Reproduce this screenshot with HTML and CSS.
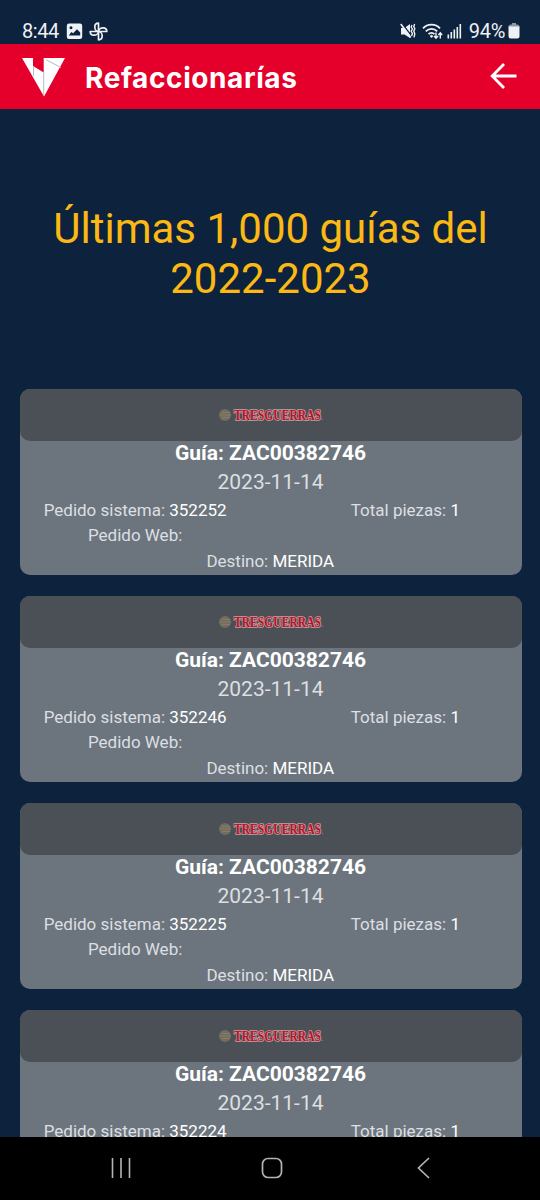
FILE: index.html
```html
<!DOCTYPE html>
<html lang="es">
<head>
    <meta charset="UTF-8">
    <meta name="viewport" content="width=device-width, initial-scale=1.0">
    <title>Refaccionarías</title>
    <link rel="stylesheet" href="styles.css">
</head>
<body>
    <div class="status-bar">
        <div class="status-left">
            <span class="clock">8:44</span>
            <svg class="icon-image" width="17" height="17" viewBox="0 0 17 17">
                <path fill="#eef1f5" fill-rule="evenodd" d="M3 .5h11a2.2 2.2 0 0 1 2.2 2.2v11a2.2 2.2 0 0 1-2.2 2.3H3a2.2 2.2 0 0 1-2.2-2.3v-11A2.2 2.2 0 0 1 3 .5zM2.800 12.500h11.400v-3l-3.200-3.200-3.900 4-1.700-1.400zM5 3.300a1.500 1.500 0 1 0 .01 0z"/>
            </svg>
            <svg class="icon-fan" width="19" height="19" viewBox="0 0 19 19" fill="none" stroke="#eef1f5" stroke-width="1.700" stroke-linejoin="round">
                <path d="M9.500 9.500V1.200C7 1.200 5.800 2.900 5.800 4.900c0 2.300 1.500 4.600 3.700 4.600z"/>
                <path d="M9.500 9.500h8.300c0-2.500-1.700-3.700-3.700-3.700-2.300 0-4.600 1.500-4.600 3.700z"/>
                <path d="M9.500 9.500v8.300c2.500 0 3.700-1.700 3.700-3.700 0-2.300-1.500-4.600-3.700-4.600z"/>
                <path d="M9.500 9.500H1.200c0 2.500 1.700 3.700 3.700 3.700 2.300 0 4.600-1.500 4.600-3.700z"/>
            </svg>
        </div>
        <div class="status-right">
            <svg width="16" height="17" viewBox="0 0 16 17">
                <path fill="#eef1f5" d="M1 5h3.500L10 1v14L4.500 11.500H1z"/>
                <path d="M2 .5l10 13" stroke="#0d223d" stroke-width="1.300"/>
                <path d="M.8 1l10 13.500" stroke="#eef1f5" stroke-width="1.600"/>
                <path d="M12 2l-.8 2 1.200 2-1.200 2.300 1.200 2.200-.8 2.500M14.600 1l-.8 2.500 1 2.300-1 2.500 1 2.500-.8 3.500" fill="none" stroke="#eef1f5" stroke-width="1.400"/>
            </svg>
            <svg class="icon-wifi" width="21" height="17" viewBox="0 0 21 17" fill="none" stroke="#eef1f5" stroke-width="1.800">
                <path d="M1 5.300c4.500-4.900 12.500-4.900 17 0M3.800 8.300c3.200-3.300 8.200-3.300 11.400 0M6.500 11.200c1.700-1.700 4.300-1.700 6 0"/>
                <circle cx="9.500" cy="13.300" r="1" fill="#eef1f5" stroke-width="1"/>
                <path stroke-width="1.400" d="M14 9.500V15M12 13l2 2.300 2-2.300M18.300 15.500v-5M16.400 12l1.900-2.200 1.900 2.200"/>
            </svg>
            <svg class="icon-signal" width="15" height="16" viewBox="0 0 15 16" fill="#eef1f5">
                <rect x="0.500" y="11.500" width="1.600" height="4"/>
                <rect x="3.500" y="9" width="1.600" height="6.500"/>
                <rect x="6.500" y="6.500" width="1.600" height="9"/>
                <rect x="9.500" y="4" width="1.600" height="11.500"/>
                <rect x="12.500" y="1" width="1.600" height="14.500"/>
            </svg>
            <span class="battery-text">94%</span>
            <svg class="icon-battery" width="12" height="16" viewBox="0 0 12 16">
                <path fill="#8d98a6" d="M4 0h4v1.500h1.500Q11.500 1.500 11.500 4H.5Q.5 1.500 2.500 1.500H4z"/>
                <path fill="#eef1f5" d="M.5 3.500h11V13q0 2.500-2.500 2.500H3Q.5 15.500.5 13z"/>
            </svg>
        </div>
    </div>

    <header class="navbar">
        <svg class="logo" width="44" height="40" viewBox="0 0 44 40">
            <path fill="#fff" d="M0 1h11v8l10.700 6.500V1H43L22 39.500z"/>
            <path d="M11.500 9v10M21.700 15v23M24.500 3l14.500 7.500" stroke="#b9b9bf" stroke-width="1" fill="none"/>
        </svg>
        <h1 class="brand">Refaccionarías</h1>
        <svg class="back" width="27" height="26" viewBox="0 0 27 26" fill="none" stroke="#fff" stroke-width="2.800">
            <path d="M26.500 13H2.500M14 1L2.200 13 14 25"/>
        </svg>
    </header>

    <main class="content">
        <h2 class="title">Últimas 1,000 guías del 2022-2023</h2>
        <div class="cards" id="cards"></div>
    </main>

    <nav class="system-nav">
        <svg width="22" height="22" viewBox="0 0 22 22" stroke="#b4b4b4" stroke-width="1.600">
            <path d="M2.500 1v20M11 1v20M19.500 1v20"/>
        </svg>
        <svg width="22" height="22" viewBox="0 0 22 22" fill="none" stroke="#b4b4b4" stroke-width="1.700">
            <rect x="1.500" y="1.500" width="19" height="19" rx="5.500"/>
        </svg>
        <svg width="22" height="22" viewBox="0 0 22 22" fill="none" stroke="#b4b4b4" stroke-width="1.700">
            <path d="M17 1L6.500 11 17 21"/>
        </svg>
    </nav>

    <script>
        const guias = [
            { guia: "ZAC00382746", fecha: "2023-11-14", pedido: "352252", piezas: 1, destino: "MERIDA" },
            { guia: "ZAC00382746", fecha: "2023-11-14", pedido: "352246", piezas: 1, destino: "MERIDA" },
            { guia: "ZAC00382746", fecha: "2023-11-14", pedido: "352225", piezas: 1, destino: "MERIDA" },
            { guia: "ZAC00382746", fecha: "2023-11-14", pedido: "352224", piezas: 1, destino: "MERIDA" }
        ];

        document.getElementById("cards").innerHTML = guias.map(g => `
            <div class="card">
                <div class="card-header">
                    <svg class="carrier-logo" width="106" height="24" viewBox="0 0 106 24">
                        <circle cx="7" cy="12" r="6" fill="#706d62"/>
                        <path d="M4 9.500h8M2 12h11M4 14.500h8" stroke="#8d7c5e" stroke-width="1"/>
                        <text class="carrier" x="16" y="17" textLength="87" lengthAdjust="spacingAndGlyphs">TRESGUERRAS</text>
                        <circle cx="104.500" cy="16.500" r="0.800" fill="#8a6b70"/>
                    </svg>
                </div>
                <div class="card-body">
                    <h5 class="guia">Guía: ${g.guia}</h5>
                    <p class="fecha">${g.fecha}</p>
                    <div class="row">
                        <div class="col">Pedido sistema: <span>${g.pedido}</span></div>
                        <div class="col">Total piezas: <span>${g.piezas}</span></div>
                    </div>
                    <div class="row">
                        <div class="col">Pedido Web:</div>
                        <div class="col"></div>
                    </div>
                    <div class="row">
                        <div class="col">Destino: <span>${g.destino}</span></div>
                    </div>
                </div>
            </div>`).join("");
    </script>
</body>
</html>
```
FILE: styles.css
```css
* {
    box-sizing: border-box;
}

body {
    margin: 0;
    height: 1200px;
    display: flex;
    flex-direction: column;
    overflow: hidden;
    font-family: Roboto, sans-serif;
    background-color: #0d223d;
    color: #fff;
}

svg {
    display: block;
    flex: none;
}

.status-bar {
    height: 44px;
    flex: none;
    padding: 18px 20px 0 22px;
    display: flex;
    justify-content: space-between;
    color: #eef1f5;
    font-size: 20px;
    line-height: 26px;
}

.status-left,
.status-right {
    display: flex;
    align-items: center;
    height: 26px;
}

.clock {
    letter-spacing: -0.4px;
}

.icon-image {
    margin-left: 7px;
}

.icon-fan {
    margin-left: 6px;
}

.icon-wifi {
    margin-left: 6px;
}

.icon-signal {
    margin-left: 4px;
}

.battery-text {
    margin-left: 7px;
    letter-spacing: -0.3px;
}

.icon-battery {
    margin-left: 3px;
}

.navbar {
    height: 65px;
    flex: none;
    display: flex;
    align-items: center;
    padding: 0 23px 0 22px;
    background-color: #e4002b;
}

.brand {
    flex: 1;
    margin: 2px 0 0 19px;
    font-family: Inter, sans-serif;
    font-size: 28px;
    font-weight: 700;
    letter-spacing: 0.6px;
    line-height: 40px;
}

.back {
    margin-top: -2px;
}

.content {
    flex: 1;
    min-height: 0;
    overflow: hidden;
    padding: 95px 18.500px 0 19.500px;
}

.title {
    margin: 0 0 85px;
    text-align: center;
    font-size: 42px;
    font-weight: 400;
    line-height: 50px;
    color: #fcb813;
}

.cards {
    display: flex;
    flex-direction: column;
    gap: 21px;
}

.card {
    height: 186px;
    flex: none;
    border-radius: 10px;
    background-color: #6c757d;
}

.card-header {
    height: 52px;
    display: flex;
    align-items: center;
    justify-content: center;
    border-radius: 10px;
    background-color: #4b4f56;
}

.carrier-logo {
    overflow: visible;
}

.carrier {
    font-family: "Liberation Serif", serif;
    font-size: 14px;
    font-weight: bold;
    fill: #bd1226;
    stroke: #c3a0a3;
    stroke-width: 1.600px;
    paint-order: stroke;
}

.card-body {
    text-align: center;
    font-size: 17px;
    line-height: 25.500px;
    color: #dcdfe3;
}

.guia {
    margin: 0;
    font-size: 21px;
    font-weight: 700;
    line-height: 25px;
    color: #fff;
}

.fecha {
    margin: 0 0 -0.200px;
    font-size: 21px;
    line-height: 32px;
}

.row {
    display: flex;
    margin: 0 -19px 0 -19.500px;
}

.col {
    flex: 1;
}

.col span {
    color: #fff;
}

.system-nav {
    height: 63px;
    flex: none;
    display: flex;
    align-items: center;
    justify-content: space-between;
    padding: 0 106px 2px 110px;
    background-color: #000;
}
```
